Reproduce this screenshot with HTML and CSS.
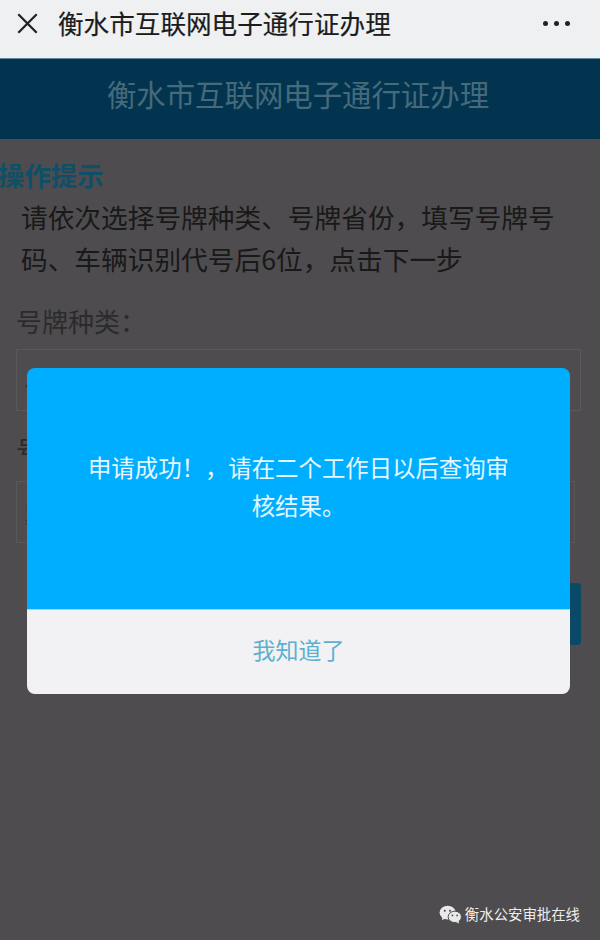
FILE: index.html
```html
<!DOCTYPE html>
<html lang="zh-CN">
<head>
<meta charset="utf-8">
<title>衡水市互联网电子通行证办理</title>
<link rel="stylesheet" href="styles.css">
</head>
<body>
<div class="page">
  <header class="topbar">
    <svg class="close" viewBox="0 0 24 24" aria-hidden="true"><path d="M1.5 1.5 22.5 22.5M22.5 1.5 1.5 22.5"/></svg>
    <div class="topbar-title">衡水市互联网电子通行证办理</div>
    <div class="more"><i></i><i></i><i></i></div>
  </header>
  <div class="banner">衡水市互联网电子通行证办理</div>
  <main class="content">
    <h2 class="tip-title">操作提示</h2>
    <p class="tip">请依次选择号牌种类、号牌省份，填写号牌号码、车辆识别代号后6位，点击下一步</p>
    <label class="label label-first">号牌种类：</label>
    <div class="field"><span>小型汽车</span></div>
    <label class="label label-second">号牌省份：</label>
    <div class="field field-short"><span>冀</span></div>
    <div class="next">下一步</div>
  </main>
  <div class="dialog">
    <div class="dialog-body"><p>申请成功！，请在二个工作日以后查询审核结果。</p></div>
    <div class="dialog-action">我知道了</div>
  </div>
  <footer class="mark">
    <svg class="wechat" viewBox="0 0 24 20" aria-hidden="true">
      <ellipse cx="9" cy="8" rx="8.5" ry="7.2" fill="#e9e9e9"/>
      <path d="M3.5 12.5 3 16l4-2z" fill="#e9e9e9"/>
      <ellipse cx="16.5" cy="12.5" rx="7" ry="6" fill="#e9e9e9" stroke="#4c4a4c" stroke-width="1"/>
      <path d="M20.5 16.5 21 19.5 17.5 18z" fill="#e9e9e9"/>
      <circle cx="6" cy="6" r="1.1" fill="#4c4a4c"/><circle cx="11.5" cy="6" r="1.1" fill="#4c4a4c"/>
      <circle cx="14" cy="11" r=".9" fill="#4c4a4c"/><circle cx="19" cy="11" r=".9" fill="#4c4a4c"/>
    </svg>
    <span>衡水公安审批在线</span>
  </footer>
</div>
</body>
</html>
```
FILE: styles.css
```css
* { box-sizing: border-box; }
html, body { margin: 0; padding: 0; }
body { font-family: "Noto Sans CJK SC", "Liberation Sans", sans-serif; }
.page { position: relative; width: 600px; height: 940px; overflow: hidden; background: #4e4c4e; }
.topbar { height: 58px; background: #eef0f1; display: flex; align-items: center; padding: 0 30px 0 17px; }
.close { width: 21px; height: 21px; fill: none; stroke: #222; stroke-width: 2.6; flex: none; margin-top: -12px; }
.topbar-title { flex: 1; margin: -12px 0 0 20px; font-size: 25.6px; line-height: 36px; color: #1c1c1c; white-space: nowrap; -webkit-text-stroke: 0.2px #1c1c1c; }
.more { display: flex; gap: 6px; margin-top: -11px; }
.more i { width: 5px; height: 5px; border-radius: 50%; background: #222; }
.banner { height: 81px; background: #03344f; border-top: 1px solid #5d8a9c; padding-right: 4px; color: #456a7b; font-size: 29.4px; line-height: 69px; text-align: center; white-space: nowrap; }
.content { padding: 0 19px 0 16px; }
.tip-title { margin: 17px 0 0 -18px; font-size: 26.4px; line-height: 38px; font-weight: 700; color: #0f4f68; }
.tip { margin: 2px 0 0 5px; font-size: 26.7px; line-height: 42px; color: #191919; }
.label { display: block; font-size: 26px; line-height: 38px; color: #2b2b2b; }
.label-first { margin-top: 22px; }
.label-second { margin-top: 19px; }
.field { height: 62px; margin-top: 9px; border: 1px solid #5a585a; display: flex; align-items: center; padding-left: 8px; font-size: 23px; color: #222; }
.field-short { margin-right: 6px; margin-top: 13px; }
.next { height: 62px; margin: 40px 0 0 100px; background: #0a4a68; border-radius: 4px; color: #d5e0e5; font-size: 24px; line-height: 62px; text-align: center; }
.dialog { position: absolute; left: 27px; top: 368px; width: 543px; height: 326px; border-radius: 8px; overflow: hidden; display: flex; flex-direction: column; }
.dialog-body { height: 241px; background: #00aeff; padding: 80px 60px 0; }
.dialog-body p { margin: 0; font-size: 23.4px; line-height: 38px; color: #e6f7ff; text-align: center; }
.dialog-action { flex: 1; background: #f2f2f4; border-top: 1px solid #9bd9f4; font-size: 23px; line-height: 79px; text-align: center; color: #5fb0cf; }
.mark { position: absolute; right: 20px; bottom: 16px; display: flex; align-items: center; gap: 3px; font-size: 14.4px; line-height: 20px; color: #ededed; white-space: nowrap; }
.wechat { width: 23px; height: 19px; }
```
